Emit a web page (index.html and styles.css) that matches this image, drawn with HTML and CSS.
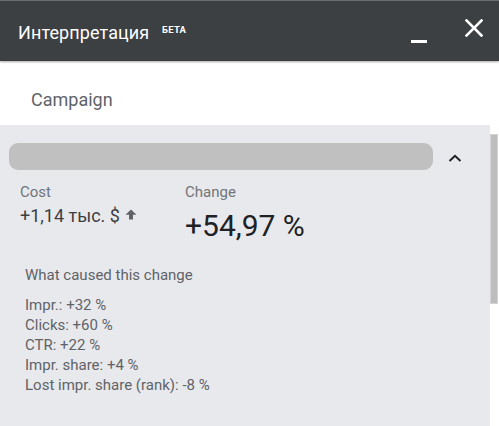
FILE: index.html
```html
<!DOCTYPE html>
<html>
<head>
<meta charset="utf-8">
<link rel="stylesheet" href="styles.css">
</head>
<body>
<div class="app">
  <header class="topbar">
    <div class="title">Интерпретация <sup class="beta">БЕТА</sup></div>
    <div class="actions">
      <svg class="ic-min" width="17" height="3" viewBox="0 0 17 3"><rect x="0" y="0" width="16" height="3" fill="#fff"/></svg>
      <svg class="ic-close" width="18" height="18" viewBox="0 0 18 18"><path d="M1.5 1.5 L16.5 16.5 M16.5 1.5 L1.5 16.5" stroke="#fff" stroke-width="2.6" stroke-linecap="square"/></svg>
    </div>
  </header>
  <div class="crumb">Campaign</div>
  <div class="body">
    <section class="panel">
      <div class="panel-head">
        <div class="blur"></div>
        <svg class="chev" width="14" height="8" viewBox="0 0 14 8"><path d="M1.5 7 L7 1.8 L12.5 7" fill="none" stroke="#202124" stroke-width="2"/></svg>
      </div>
      <div class="metrics">
        <div class="metric cost">
          <div class="label">Cost</div>
          <div class="value">+1,14 тыс. $ <svg class="up" width="12" height="11" viewBox="0 0 12 11"><path d="M6 0.5 L11.5 5.8 L8 5.8 L8 10.5 L4 10.5 L4 5.8 L0.5 5.8 Z" fill="#5f6368"/></svg></div>
        </div>
        <div class="metric change">
          <div class="label">Change</div>
          <div class="big">+54,97 %</div>
        </div>
      </div>
      <div class="cause">
        <div class="cause-title">What caused this change</div>
        <ul class="list">
          <li>Impr.: +32 %</li>
          <li>Clicks: +60 %</li>
          <li>CTR: +22 %</li>
          <li>Impr. share: +4 %</li>
          <li>Lost impr. share (rank): -8 %</li>
        </ul>
      </div>
    </section>
    <div class="scroll"><div class="thumb"></div></div>
  </div>
</div>
</body>
</html>
```
FILE: styles.css
```css
html, body { margin: 0; padding: 0; }
body { font-family: Roboto, "Noto Sans", Arial, sans-serif; background: #fff; width: 499px; height: 426px; overflow: hidden; }
.app { display: flex; flex-direction: column; height: 426px; }
.topbar {
  height: 61px; background: #3c4043; border-top: 1px solid #6b6e71;
  box-shadow: 0 1px 2px rgba(0,0,0,0.35);
  display: flex; align-items: center; justify-content: space-between;
  padding: 0 16px 0 18px; box-sizing: border-box; position: relative; z-index: 1;
}
.title { color: #fff; font-size: 18px; letter-spacing: 0.1px; margin-top: 2px; }
.beta { font-size: 9.5px; font-weight: 700; vertical-align: 0; position: relative; top: -6px; margin-left: 8px; letter-spacing: 0.3px; }
.actions { display: flex; align-items: center; gap: 37px; }
.ic-min { margin-top: 20px; }
.ic-close { margin-top: -6px; }
.crumb { height: 64px; box-sizing: border-box; padding: 28px 0 0 31px; font-size: 18px; line-height: 21px; color: #5f6368; }
.body { flex: 1; display: flex; }
.panel { width: 490px; background: #e8e9ed; box-sizing: border-box; padding: 18px 0 0 0; }
.panel-head { display: flex; align-items: center; padding-left: 9px; }
.blur { width: 424px; height: 27px; background: #c0c0c0; border-radius: 9px; }
.chev { margin-left: 15px; margin-top: 2px; }
.metrics { display: flex; padding: 13px 0 0 20px; }
.metric.cost { width: 165px; }
.label { font-size: 15px; color: #70757a; line-height: 18px; }
.value { font-size: 18px; line-height: 21px; color: #3c4043; margin-top: 4px; display: flex; align-items: center; gap: 5px; }
.up { margin-top: -3px; }
.big { font-size: 30px; color: #202124; margin-top: 7px; line-height: 35px; }
.cause { padding: 23px 0 0 25px; color: #5f6368; font-size: 15px; }
.cause-title { line-height: 18px; }
.list { list-style: none; margin: 11px 0 0 0; padding: 0; }
.list li { line-height: 20px; }
.scroll { width: 9px; padding-top: 9px; box-sizing: border-box; }
.thumb { width: 8px; height: 170px; background: #bdbdbd; border: 1px solid #d4d4d4; box-sizing: border-box; }
```
